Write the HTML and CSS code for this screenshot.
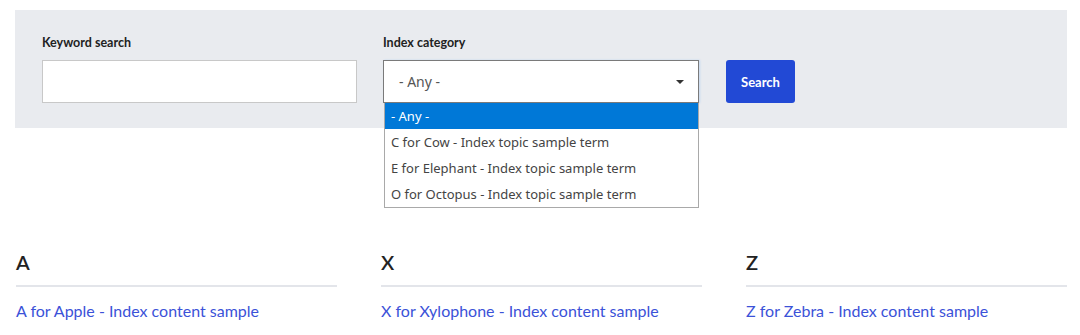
FILE: index.html
```html
<!DOCTYPE html>
<html lang="en">
<head>
    <meta charset="UTF-8"/>
    <meta name="viewport" content="width=device-width, initial-scale=1.0"/>
    <title>Index</title>
    <link rel="stylesheet" href="styles.css">
</head>
<body>
<div class="page">
    <form class="search-panel">
        <div class="field">
            <label class="field-label" for="keyword">Keyword search</label>
            <input class="text-input" id="keyword" type="text"/>
        </div>
        <div class="field select-field">
            <label class="field-label" for="category">Index category</label>
            <div class="select-box" id="category">
                <span class="select-value">- Any -</span>
                <span class="select-arrow"></span>
            </div>
            <ul class="dropdown">
                <li class="option selected">- Any -</li>
                <li class="option">C for Cow - Index topic sample term</li>
                <li class="option">E for Elephant - Index topic sample term</li>
                <li class="option">O for Octopus - Index topic sample term</li>
            </ul>
        </div>
        <button class="search-btn" type="button">Search</button>
    </form>

    <div class="index-grid">
        <div class="index-col">
            <h2 class="letter">A</h2>
            <a class="entry" href="#">A for Apple - Index content sample</a>
        </div>
        <div class="index-col">
            <h2 class="letter">X</h2>
            <a class="entry" href="#">X for Xylophone - Index content sample</a>
        </div>
        <div class="index-col">
            <h2 class="letter">Z</h2>
            <a class="entry" href="#">Z for Zebra - Index content sample</a>
        </div>
    </div>
</div>
</body>
</html>
```

FILE: styles.css
```css
body {
    margin: 0;
    font-family: Lato, "Noto Sans", sans-serif;
    background-color: #fff;
    color: #222;
}

.page {
    padding: 10px 13px 0 15px;
}

.search-panel {
    display: flex;
    align-items: flex-end;
    background-color: #e9ebef;
    padding: 24px 27px 25px 27px;
    margin: 0;
}

.field {
    display: flex;
    flex-direction: column;
    margin-right: 26px;
}

.select-field {
    position: relative;
    margin-right: 27px;
}

.field-label {
    font-size: 12.5px;
    font-weight: bold;
    color: #222;
    line-height: 18px;
    margin-bottom: 8px;
}

.text-input {
    width: 315px;
    height: 43px;
    box-sizing: border-box;
    border: 1px solid #c8c8c8;
    background: #fff;
    margin: 0;
    padding: 0 10px;
}

.select-box {
    width: 316px;
    height: 43px;
    box-sizing: border-box;
    border: 1px solid #7a7a7a;
    background: #fff;
    display: flex;
    align-items: center;
    justify-content: space-between;
    padding: 0 14px 0 15px;
    box-shadow: 1px 0 2px #c5d8f0;
}

.select-value {
    font-family: "Noto Sans", sans-serif;
    font-size: 14px;
    color: #555;
}

.select-arrow {
    width: 0;
    height: 0;
    border-left: 4px solid transparent;
    border-right: 4px solid transparent;
    border-top: 4px solid #333;
}

/* open list of the select */
.dropdown {
    position: absolute;
    top: 69px;
    left: 1px;
    width: 315px;
    box-sizing: border-box;
    margin: 0;
    padding: 0;
    list-style: none;
    background: #fff;
    border: 1px solid #a9a9a9;
    border-top: none;
}

.option {
    height: 26px;
    line-height: 26px;
    padding-left: 6px;
    font-family: "Noto Sans", sans-serif;
    font-size: 13px;
    color: #444;
}

.option.selected {
    background-color: #0078d7;
    color: #fff;
}

.search-btn {
    width: 69px;
    height: 43px;
    border: none;
    border-radius: 3px;
    background-color: #2249d5;
    color: #fff;
    font-family: Lato, sans-serif;
    font-weight: bold;
    font-size: 13px;
    padding: 0;
    margin-bottom: 0;
}

.index-grid {
    display: grid;
    grid-template-columns: repeat(3, 321px);
    column-gap: 44px;
    margin-top: 122px;
    padding-left: 1px;
}

.letter {
    font-size: 20px;
    font-weight: 600;
    color: #222;
    margin: 0;
    line-height: 24px;
    padding-bottom: 11px;
    border-bottom: 2px solid #e3e5ea;
}

.entry {
    display: block;
    margin-top: 14px;
    font-size: 16px;
    color: #3b52d8;
    text-decoration: none;
}
```
